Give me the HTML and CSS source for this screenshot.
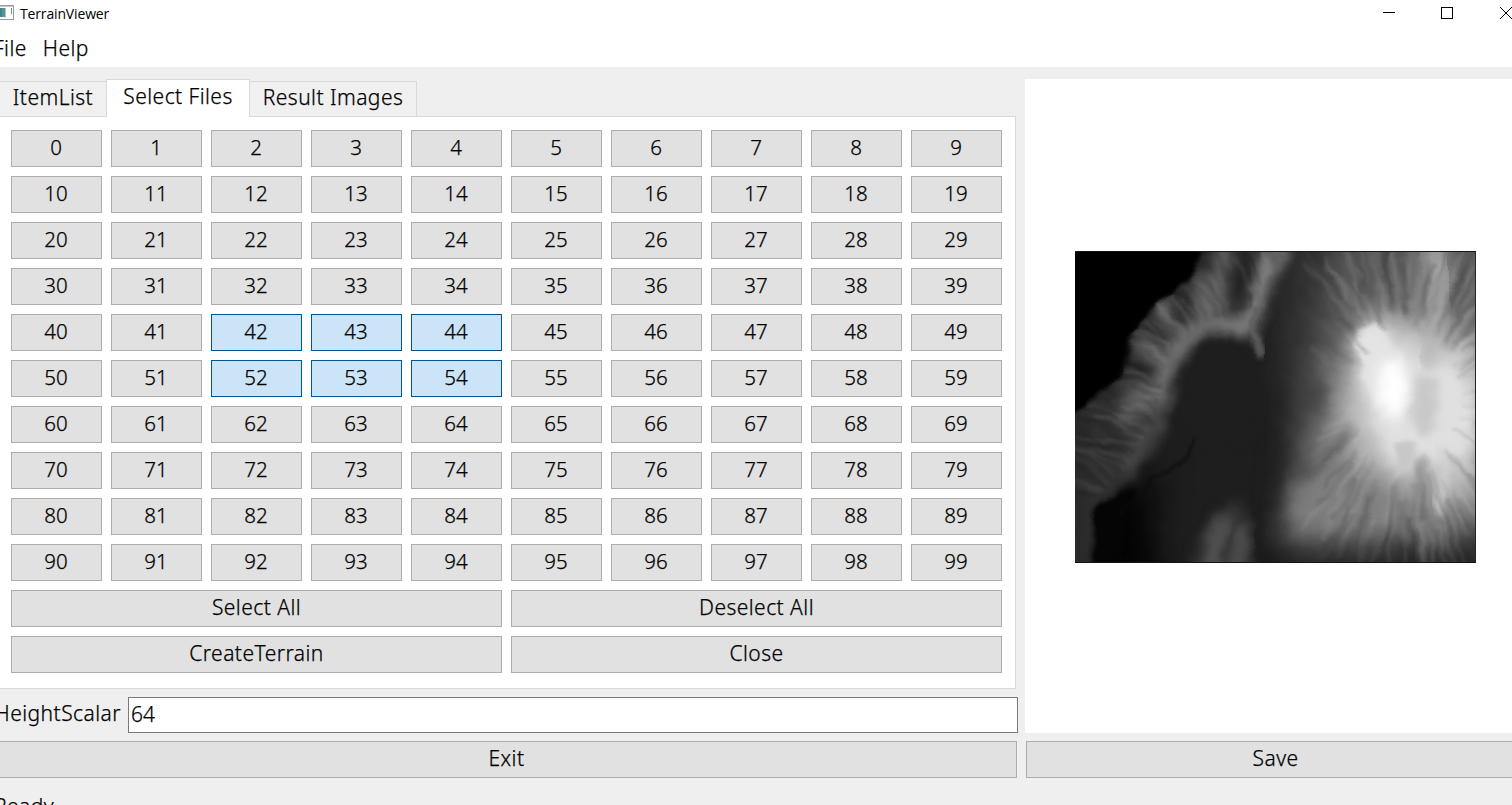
FILE: index.html
```html
<!DOCTYPE html>
<html lang="en">
<head>
<meta charset="utf-8">
<title>TerrainViewer</title>
<link rel="stylesheet" href="styles.css">
</head>
<body>
<header class="titlebar">
  <svg class="app-icon" width="14" height="16" viewBox="0 0 14 16">
    <rect x="-3" y=".5" width="16.500" height="14" fill="#fff" stroke="#989ca4"/>
    <path d="M0 1.500H13" stroke="#c4c8ce"/>
    <rect x="0" y="3" width="5" height="9" fill="#4d9a86"/>
    <path d="M0 3h2v9H0" fill="#477f9b"/>
    <path d="M5.500 3v10" stroke="#b8bec5" fill="none"/>
    <path d="M11.500 3v6" stroke="#59a184"/>
  </svg>
  <span class="app-title">TerrainViewer</span>
  <svg class="window-controls" width="132" height="26" viewBox="0 0 132 26" fill="none" stroke="#000" shape-rendering="crispEdges">
    <path d="M3 12.500h12"/>
    <rect x="61.500" y="7.500" width="11" height="11"/>
    <path d="M120 7l12 12M120 19l12-12" shape-rendering="auto"/>
  </svg>
</header>
<nav class="menubar"><span>File</span><span>Help</span></nav>
<main class="workspace">
  <section class="left">
    <div class="tabs">
      <div class="tab tab-first">ItemList</div>
      <div class="tab tab-active">Select Files</div>
      <div class="tab tab-last">Result Images</div>
    </div>
    <div class="panel">
      <div class="grid" id="grid"></div>
      <div class="actions">
        <button class="btn">Select All</button>
        <button class="btn">Deselect All</button>
        <button class="btn">CreateTerrain</button>
        <button class="btn">Close</button>
      </div>
    </div>
    <div class="field"><label for="scalar">HeightScalar</label><input id="scalar" type="text" value="64"></div>
    <button class="btn exit">Exit</button>
  </section>
  <section class="right">
    <div class="preview">
      <svg class="terrain" width="401" height="312" viewBox="0 0 401 312">
        <defs>
          <filter id="b2" x="-20%" y="-20%" width="140%" height="140%"><feGaussianBlur stdDeviation="2"/></filter>
          <filter id="b4" x="-30%" y="-30%" width="160%" height="160%"><feGaussianBlur stdDeviation="4"/></filter>
          <filter id="b6" x="-40%" y="-40%" width="180%" height="180%"><feGaussianBlur stdDeviation="6.500"/></filter>
          <filter id="b14" x="-60%" y="-60%" width="220%" height="220%"><feGaussianBlur stdDeviation="15"/></filter>
          <filter id="soft" x="-10%" y="-10%" width="120%" height="120%"><feGaussianBlur stdDeviation="1.600"/></filter>
          <filter id="rough" filterUnits="userSpaceOnUse" x="-20" y="-20" width="441" height="352">
            <feTurbulence type="fractalNoise" baseFrequency=".05" numOctaves="2" seed="4" result="n"/>
            <feDisplacementMap in="SourceGraphic" in2="n" scale="9" xChannelSelector="R" yChannelSelector="G" result="d"/>
            <feGaussianBlur in="d" stdDeviation=".7"/>
          </filter>
          <clipPath id="slope"><path d="M135 0L118 24 98 42 85 46 65 72 57 84 50 117 35 134 17 147 0 166V312H12L28 254 58 224 88 190 95 157 91 140 101 124 100 107 112 90 128 80 141 74 175 80 185 110 182 57 205 10 212 0Z"/></clipPath>
        </defs>
        <g filter="url(#rough)">
          <rect x="-20" y="-20" width="441" height="352" fill="#1e1e1e"/>
          <path d="M205-20H421V332H205L212 235 216 180 202 110Z" fill="#303030" filter="url(#b14)"/>
          <path d="M262-20H421V300H205L225 235 225 180 235 100Z" fill="#5a5a5a" filter="url(#b14)"/>
          <path d="M-20 332V250L20 254 60 240 90 215 75 280 95 332Z" fill="#030303" filter="url(#b14)"/>
          <path d="M135-10L118 24 98 42 85 46 65 72 57 84 50 117 35 134 17 147-10 172V332H12L20 280 28 254 58 224 88 190 95 157 91 140 101 124 100 107 112 90 128 80 141 74 175 80 185 110 182 57 205 20 216-10Z" fill="#303030" filter="url(#b4)"/>
          <g fill="none" stroke-linecap="round" stroke-linejoin="round" filter="url(#b6)">
            <path d="M205-5L190 25 180 55 172 74M165 76L141 72 125 78 108 92 94 107 88 130 84 155" stroke="#808080" stroke-width="17"/>
            <path d="M84 160L72 185 54 212" stroke="#484848" stroke-width="16"/>
            <path d="M97 110L68 95M86 135L58 145M80 145L50 165M140 70L150 0M110 88L88 55M125 75L128 30" stroke="#686868" stroke-width="16"/>
            <path d="M5 170V330" stroke="#282828" stroke-width="14"/>
            <path d="M160 0L168 45M99 50L106 75" stroke="#141414" stroke-width="7"/>
          </g>
          <path d="M182 55L176 78 182 94 186 108" fill="none" stroke="#606060" stroke-width="6" filter="url(#b2)"/>
          <path d="M115 128Q120 92 148 90Q176 90 184 132L186 190 120 200 108 160Z" fill="#1e1e1e" filter="url(#b4)"/>
          <path d="M-20-20H135L118 24 98 42 85 46 65 72 57 84 50 117 35 134 17 147-20 180Z" fill="#000" filter="url(#b2)"/>
          <path d="M18 255L30 252 62 236 50 275 40 330H16L21 290Z" fill="#050505" filter="url(#b2)"/>
          <path d="M118 187L112 205 95 219 78 227 67 240 45 264" fill="none" stroke="#0b0b0b" stroke-width="3" opacity=".7" filter="url(#soft)"/>
          <path d="M115 335L125 292 150 256 165 252 172 270 180 335Z" fill="#383838" filter="url(#b6)"/>
          <path d="M135 330L140 290 150 265M165 330L167 275" fill="none" stroke="#5a5a5a" stroke-width="12" filter="url(#b6)"/>
          <path d="M148 308L158 280 166 262" fill="none" stroke="#2a2a2a" stroke-width="3" opacity=".6" filter="url(#b2)"/>
          <g filter="url(#b14)">
            <path d="M256 130L285 75 320 40 345-10 385-10 415 80 415 250 370 305 330 290 270 300 212 290 230 225 252 170Z" fill="#808080"/>
            <path d="M280 75L310 55 350 80 415 90V240L370 255 325 235 275 205 258 165 272 135Z" fill="#bcbcbc"/>
            <path d="M285 75L350 95 400 110V210L320 215 285 150Z" fill="#ddd"/>
          </g>
          <path d="M216 236L255 225 295 245 300 290 225 285 212 265Z" fill="#808080" opacity=".6" filter="url(#b6)"/>
          <path d="M281 90L288 74 303 72 313 91 328 112 345 118 380 125 402 150 395 180 380 212 350 204 322 220 305 180 290 140Z" fill="#e0e0e0" filter="url(#b6)"/>
          <path d="M281 95L287 75 304 71 312 88 326 106 332 134 320 165 308 170 290 132Z" fill="#e6e6e6" opacity=".75" filter="url(#b2)"/>
          <path d="M306 108L328 112 334 142 322 175 304 148Z" fill="#fff" filter="url(#b6)"/>
          <path d="M343 122L360 128 364 150 357 182 348 188 336 165Z" fill="#c8c8c8" filter="url(#b4)"/>
          <path d="M320 192L342 192 335 215 322 228Z" fill="#c8c8c8" filter="url(#b2)"/>
          <path d="M366 195L374 215 367 238 363 262" fill="none" stroke="#d0d0d0" stroke-width="8" filter="url(#b4)"/>
          <path d="M355-10L368 25 360 75 352 115" fill="none" stroke="#b4b4b4" stroke-width="20" opacity=".65" filter="url(#b6)"/>
          <path d="M315-10L312 18 320 48 335 65M388-10L385 40 378 60" fill="none" stroke="#3a3a3a" stroke-width="7" opacity=".6" filter="url(#b4)"/>
          <path d="M216 204L232 222 250 214 262 196 278 170M345 205L346 235 350 270" fill="none" stroke="#3c3c3c" stroke-width="6" opacity=".55" filter="url(#b4)"/>
          <path d="M225 165L250 160 253 140 225 125" fill="#333" opacity=".5" filter="url(#b6)"/>
          <path d="M180 290H421V332H180Z" fill="#111" opacity=".55" filter="url(#b14)"/>
          <g id="streaks" fill="none" stroke-linecap="round" filter="url(#soft)"></g>
          <g id="slopes" fill="none" stroke-linecap="round" clip-path="url(#slope)" filter="url(#soft)"></g>
        </g>
        <path d="M0 .5H401M0 311.500H401" stroke="#151515"/>
        <path d="M400.500 0V312" stroke="#252525"/>
      </svg>
    </div>
    <button class="btn save">Save</button>
  </section>
</main>
<footer class="statusbar">Ready</footer>
<script src="app.js"></script>
</body>
</html>
```

FILE: styles.css
```css
* { box-sizing: border-box; }
body { margin: 0; width: 1512px; height: 805px; overflow: hidden; display: flex; flex-direction: column; background: #efefef; color: #000; font-family: "Noto Sans", sans-serif; font-size: 21px; font-weight: 300; line-height: 27px; letter-spacing: .45px; -webkit-text-stroke: .25px #000; }
.titlebar { height: 27px; flex: none; background: #fff; display: flex; align-items: flex-start; -webkit-text-stroke: 0; }
.app-icon { margin-top: 5px; flex: none; }
.app-title { margin: 3px 0 0 6px; font-family: "Open Sans", sans-serif; font-size: 14px; font-weight: 400; line-height: 21px; letter-spacing: -.15px; }
.window-controls { margin-left: auto; flex: none; }
.menubar { height: 40px; flex: none; background: #fff; display: flex; gap: 16px; padding-top: 8px; margin-left: -8px; padding-left: 1px; }
.workspace { height: 711px; flex: none; padding-top: 12px; display: flex; gap: 7px; }
.left { width: 1018px; flex: none; display: flex; flex-direction: column; }
.tabs { height: 38px; flex: none; display: flex; align-items: flex-end; position: relative; z-index: 1; }
.tab { height: 36px; border: 1px solid #d9d9d9; background: #f0f0f0; padding-top: 2px; text-align: center; white-space: nowrap; }
.tab-first { width: 106px; border-left: 0; border-right: 0; }
.tab-active { width: 144px; height: 38px; border-bottom: 0; background: #fff; padding-top: 3px; }
.tab-last { width: 167px; border-left: 0; }
.panel { width: 1016px; height: 573px; margin-top: -1px; flex: none; background: #fff; border: 1px solid #d9d9d9; border-left: 0; padding: 13px 13px 0 11px; display: flex; flex-direction: column; gap: 9px; }
.grid { display: grid; grid-template-columns: repeat(10, 91px); gap: 9px; }
.actions { display: grid; grid-template-columns: repeat(2, 491px); gap: 9px; }
.btn { height: 37px; margin: 0; padding: 0 0 2px; border: 1px solid #adadad; border-radius: 0; background: #e1e1e1; color: #000; font: inherit; letter-spacing: inherit; text-align: center; }
.grid .btn { font-size: 20.5px; letter-spacing: 0; padding-right: 1px; }
.btn-on { background: #cce4f7; border-color: #00549a; }
.field { height: 36px; margin-top: 8px; flex: none; display: flex; }
.field label { width: 128px; padding: 3px 7px 0 0; display: flex; justify-content: flex-end; }
.field input { width: 890px; height: 36px; border: 1px solid #7a7a7a; border-radius: 0; background: #fff; color: #000; font: inherit; padding: 0 2px 3px; outline: 0; }
.exit { width: 1021px; margin: 8px 0 0 -4px; }
.right { width: 487px; flex: none; display: flex; flex-direction: column; gap: 8px; }
.preview { height: 654px; background: #fff; padding: 172px 0 0 50px; }
.terrain { display: block; background: #000; }
.terrain filter, .terrain filter * { color-interpolation-filters: sRGB; }
.save { width: 499px; margin-left: 1px; }
.statusbar { height: 27px; flex: none; margin: 15px 0 0 -6px; }
```

FILE: app.js
```js
const selected = new Set([42, 43, 44, 52, 53, 54]);
const grid = document.getElementById("grid");
for (let i = 0; i < 100; i++) {
  const button = document.createElement("button");
  button.className = selected.has(i) ? "btn btn-on" : "btn";
  button.textContent = i;
  grid.appendChild(button);
}

// Seeded generator keeps the valleys identical on every load.
let seed = 17;
const rnd = () => (seed = (seed * 16807) % 2147483647) / 2147483647;

function stroke(group, d, color, width, opacity) {
  const path = document.createElementNS("http://www.w3.org/2000/svg", "path");
  path.setAttribute("d", d);
  path.setAttribute("stroke", color);
  path.setAttribute("stroke-width", width);
  path.setAttribute("opacity", opacity);
  group.appendChild(path);
}

// Erosion lines radiating from the main summit.
const streaks = document.getElementById("streaks");
for (let i = 0; i < 230; i++) {
  const a = (i / 230) * Math.PI * 2;
  const cos = Math.cos(a), sin = Math.sin(a);
  const r1 = 60 + rnd() * 60;
  const r2 = r1 + 35 + rnd() * 60;
  const bend = (rnd() - 0.5) * 20;
  const x = r => 332 + cos * r * 0.85;
  const y = r => 148 + sin * r * 1.15;
  if (x(r2) < 225) continue;
  const m = (r1 + r2) / 2;
  const d = `M${x(r1)} ${y(r1)}Q${x(m) - sin * bend} ${y(m) + cos * bend} ${x(r2)} ${y(r2)}`;
  stroke(streaks, d, rnd() < 0.6 ? "#111" : "#ccc", 2 + rnd() * 4, 0.04 + rnd() * 0.09);
}

// Gullies running from the western crest down to the sea.
const slopes = document.getElementById("slopes");
const crest = [[205, 10], [182, 60], [141, 74], [112, 90], [98, 112], [92, 145], [85, 175], [58, 215], [25, 250]];
for (let i = 0; i < 90; i++) {
  const t = (i / 90) * (crest.length - 1);
  const k = Math.floor(t), f = t - k;
  const x = crest[k][0] + (crest[k + 1][0] - crest[k][0]) * f;
  const y = crest[k][1] + (crest[k + 1][1] - crest[k][1]) * f;
  const a = Math.PI * (1.48 - 0.38 * Math.min(1, t / 5)) + (rnd() - 0.5) * 0.6;
  const len = 30 + rnd() * 45;
  const d = `M${x + Math.cos(a) * 8} ${y + Math.sin(a) * 8}q${Math.cos(a) * len / 2 + 4} ${Math.sin(a) * len / 2 - 3} ${Math.cos(a) * len} ${Math.sin(a) * len}`;
  stroke(slopes, d, rnd() < 0.6 ? "#000" : "#aaa", 2 + rnd() * 3.5, 0.05 + rnd() * 0.09);
}
```
